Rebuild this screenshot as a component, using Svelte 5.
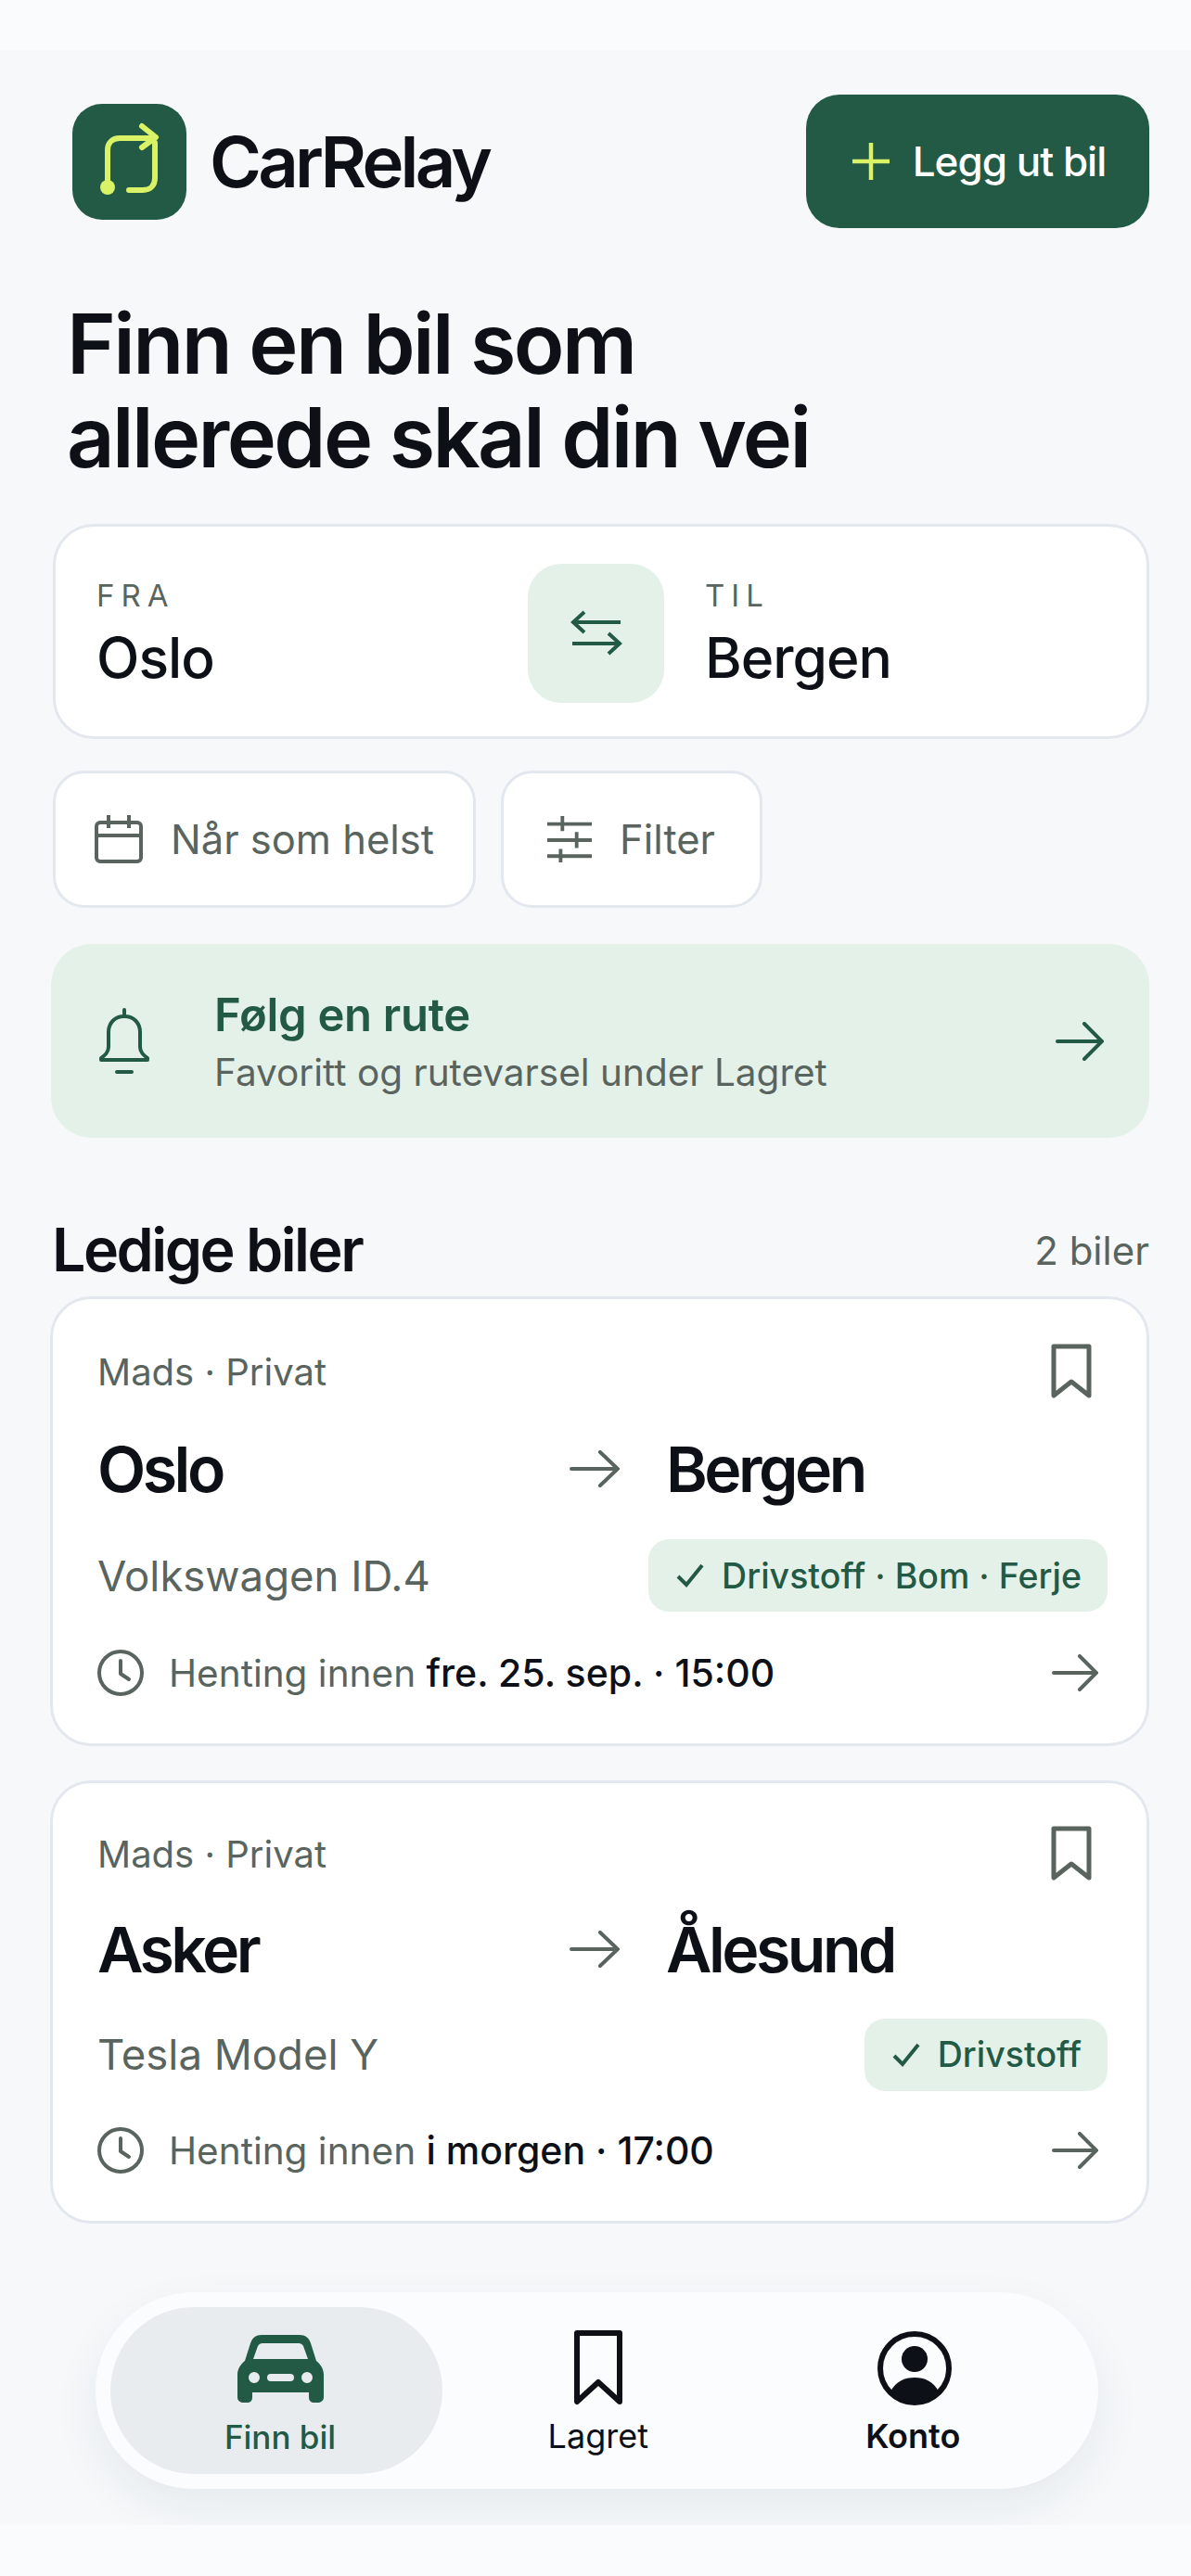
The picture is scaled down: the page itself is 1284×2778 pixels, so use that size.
<script>
	const cars = [
		{
			from: 'Oslo',
			to: 'Bergen',
			model: 'Volkswagen ID.4',
			tag: 'Drivstoff · Bom · Ferje',
			pickup: 'fre. 25. sep. · 15:00'
		},
		{
			from: 'Asker',
			to: 'Ålesund',
			model: 'Tesla Model Y',
			tag: 'Drivstoff',
			pickup: 'i morgen · 17:00'
		}
	];
</script>

<div class="screen">
	<div class="strip"></div>
	<main>
		<header>
			<div class="brand">
				<svg class="logo" viewBox="0 0 123 125">
					<rect width="123" height="125" rx="32" fill="#235a46" />
					<path d="M38 90V50C38 42 43 37 51 37H88M75 24L90 36L75 47M89 42V80C89 88 84 93 76 93H61" fill="none" stroke="#d9f266" stroke-width="6" stroke-linecap="round" stroke-linejoin="round" />
					<circle cx="38" cy="90" r="8" fill="#d9f266" />
				</svg>
				<span class="name">CarRelay</span>
			</div>
			<button class="post">
				<svg width="46" height="46" viewBox="0 0 46 46"><path d="M23 3V43M3 23H43" stroke="#d9f266" stroke-width="4.5" /></svg>
				Legg ut bil
			</button>
		</header>

		<h1>Finn en bil som<br />allerede skal din vei</h1>

		<section class="route">
			<div class="place">
				<span class="label">FRA</span>
				<span class="city">Oslo</span>
			</div>
			<button class="swap" aria-label="Bytt">
				<svg width="56" height="50" viewBox="0 0 56 50" fill="none" stroke="#235a46" stroke-width="4">
					<path d="M2 13H54M15 2L3 13L15 24M2 36H54M41 25L53 36L41 47" />
				</svg>
			</button>
			<div class="place">
				<span class="label">TIL</span>
				<span class="city">Bergen</span>
			</div>
		</section>

		<div class="chips">
			<button class="chip when">
				<svg width="52" height="52" viewBox="0 0 52 52" fill="none" stroke="#5a645f" stroke-width="4">
					<rect x="2" y="8" width="48" height="42" rx="4" />
					<path d="M2 22H50M15 0V14M37 0V14" />
				</svg>
				Når som helst
			</button>
			<button class="chip filter">
				<svg width="48" height="52" viewBox="0 0 50 52" fill="none" stroke="#5a645f" stroke-width="4">
					<path d="M0 9H50M0 27H50M0 45H50M17 0V17M33 18V36M15 37V52" />
				</svg>
				Filter
			</button>
		</div>

		<section class="follow">
			<svg width="56" height="72" viewBox="0 0 56 72" fill="none" stroke="#235a46" stroke-width="4" stroke-linecap="round" stroke-linejoin="round">
				<path d="M28 2V9M11 26C11 16 18 9 28 9S45 16 45 26V42C45 48 49 51 53 54V56H3V54C7 51 11 48 11 42ZM20 69H36" />
			</svg>
			<div class="follow-text">
				<strong>Følg en rute</strong>
				<span>Favoritt og rutevarsel under Lagret</span>
			</div>
			<svg class="arrow" width="52" height="42" viewBox="0 0 52 42" fill="none" stroke="#235a46" stroke-width="4" stroke-linecap="round">
				<path d="M2 21H49M31 2L50 21L31 40" />
			</svg>
		</section>

		<div class="list-head">
			<h2>Ledige biler</h2>
			<span>2 biler</span>
		</div>

		{#each cars as car}
			<article class="car">
				<div class="row top">
					<span class="owner">Mads · Privat</span>
					<svg width="44" height="60" viewBox="0 0 44 60" fill="none" stroke="#5a645f" stroke-width="5" stroke-linejoin="round">
						<path d="M3 3H41V56L22 41L3 56Z" />
					</svg>
				</div>
				<div class="row trip">
					<span class="end">{car.from}</span>
					<svg width="54" height="40" viewBox="0 0 54 40" fill="none" stroke="#5a645f" stroke-width="4" stroke-linecap="round">
						<path d="M2 20H51M33 2L52 20L33 38" />
					</svg>
					<span class="end">{car.to}</span>
				</div>
				<div class="row meta">
					<span class="model">{car.model}</span>
					<span class="tag">
						<svg width="30" height="26" viewBox="0 0 30 26" fill="none" stroke="#235a46" stroke-width="4"><path d="M2 14L11 23L28 2" /></svg>
						{car.tag}
					</span>
				</div>
				<div class="row pick">
					<svg width="50" height="50" viewBox="0 0 50 50" fill="none" stroke="#5a645f" stroke-width="4" stroke-linecap="round" stroke-linejoin="round">
						<circle cx="25" cy="25" r="23" />
						<path d="M25 12V26L34 32" />
					</svg>
					<span class="pickup">Henting innen <b>{car.pickup}</b></span>
					<svg class="go" width="50" height="40" viewBox="0 0 50 40" fill="none" stroke="#5a645f" stroke-width="4" stroke-linecap="round">
						<path d="M2 20H47M30 2L48 20L30 38" />
					</svg>
				</div>
			</article>
		{/each}

		<nav>
			<div class="tab active">
				<svg width="93" height="73" viewBox="0 0 93 73">
					<path fill="#235a46" fill-rule="evenodd" d="M26 0H67C73 0 77 3 79 9L85 28C90 32 93 37 93 43V67C93 71 90 73 86 73H83C79 73 77 71 77 67V62H16V67C16 71 14 73 10 73H7C3 73 0 71 0 67V43C0 37 3 32 8 28L14 9C16 3 20 0 26 0ZM27 9C25 9 23 10 22 12L17 26H76L71 12C70 10 68 9 66 9ZM18 40A6 6 0 1 0 18 52A6 6 0 1 0 18 40ZM75 40A6 6 0 1 0 75 52A6 6 0 1 0 75 40ZM36 42A4 4 0 0 0 36 50H57A4 4 0 0 0 57 42Z" />
				</svg>
				<span>Finn bil</span>
			</div>
			<div class="tab">
				<svg width="52" height="81" viewBox="0 0 52 81" fill="none" stroke="#0d1117" stroke-width="6" stroke-linejoin="round">
					<path d="M3 3H49V77L26 56L3 77Z" />
				</svg>
				<span>Lagret</span>
			</div>
			<div class="tab konto">
				<svg width="80" height="80" viewBox="0 0 80 80">
					<circle cx="40" cy="40" r="37" fill="none" stroke="#0d1117" stroke-width="6" />
					<circle cx="40" cy="30" r="14" fill="#0d1117" />
					<path d="M14 65C20 54 29 50 40 50S60 54 66 65C59 73 50 77 40 77S21 73 14 65Z" fill="#0d1117" />
				</svg>
				<span class="strong">Konto</span>
			</div>
		</nav>
	</main>
	<div class="strip bottom"></div>
</div>

<style>
	:global(body) {
		margin: 0;
		background: #fafbfc;
	}
	.screen {
		width: 1284px;
		height: 2778px;
		display: flex;
		flex-direction: column;
		font-family: Inter, 'Noto Sans', sans-serif;
		color: #0d1117;
		overflow: hidden;
	}
	.strip {
		height: 54px;
		background: #fafbfc;
		flex: none;
	}
	main {
		flex: 1;
		min-height: 0;
		background: #f6f8fa;
		padding: 48px 45px 0 55px;
		box-sizing: border-box;
	}
	header {
		display: flex;
		justify-content: space-between;
		align-items: center;
		padding-left: 23px;
	}
	.brand {
		display: flex;
		align-items: center;
		gap: 25px;
	}
	.logo {
		width: 123px;
		height: 125px;
	}
	.name {
		font-size: 76px;
		font-weight: 600;
		letter-spacing: -3.8px;
	}
	button {
		font-family: inherit;
		border: none;
		cursor: pointer;
	}
	.post {
		width: 370px;
		height: 144px;
		background: #235a46;
		color: #fff;
		border-radius: 36px;
		font-size: 44px;
		font-weight: 500;
		letter-spacing: -1px;
		display: flex;
		align-items: center;
		justify-content: center;
		gap: 22px;
	}
	h1 {
		margin: 74px 0 0 17px;
		font-size: 90px;
		line-height: 101px;
		font-weight: 600;
		letter-spacing: -2.6px;
	}
	.route {
		margin: 43px 0 0 2px;
		height: 232px;
		box-sizing: border-box;
		background: #fff;
		border: 3px solid #e3e7ee;
		border-radius: 44px;
		display: flex;
		align-items: center;
		padding: 0 40px 0 44px;
	}
	.place {
		display: flex;
		flex-direction: column;
		gap: 10px;
		padding-top: 5px;
	}
	.place:first-child {
		width: 465px;
	}
	.label {
		font-size: 33px;
		letter-spacing: 7px;
		color: #5a645f;
	}
	.city {
		font-size: 60.5px;
		font-weight: 500;
		letter-spacing: -1px;
	}
	.swap {
		width: 147px;
		height: 150px;
		margin: 4px 44px 0 0;
		border-radius: 36px;
		background: #e4f1e9;
		display: flex;
		align-items: center;
		justify-content: center;
	}
	.chips {
		display: flex;
		gap: 27px;
		margin: 34px 0 0 2px;
	}
	.chip {
		height: 148px;
		box-sizing: border-box;
		padding: 0 42px;
		background: #fff;
		border: 3px solid #e3e7ee;
		border-radius: 34px;
		font-size: 43.5px;
		color: #5a645f;
		display: flex;
		align-items: center;
		gap: 30px;
	}
	.filter {
		padding: 0 48px 0 47px;
	}
	.follow {
		margin-top: 39px;
		height: 209px;
		padding: 0 49px 0 51px;
		background: #e4f1e9;
		border-radius: 44px;
		display: flex;
		align-items: center;
		gap: 69px;
	}
	.follow-text {
		display: flex;
		flex-direction: column;
		gap: 8px;
	}
	.follow-text strong {
		font-size: 49px;
		font-weight: 600;
		letter-spacing: -0.3px;
		color: #235a46;
	}
	.follow-text span {
		font-size: 40.5px;
		color: #5a645f;
	}
	.arrow {
		margin-left: auto;
	}
	.list-head {
		margin: 82px 0 11px 2px;
		display: flex;
		justify-content: space-between;
		align-items: center;
		height: 78px;
	}
	h2 {
		margin: 0 0 0 -1px;
		font-size: 64.5px;
		font-weight: 600;
		letter-spacing: -2.5px;
	}
	.list-head span {
		font-size: 42px;
		color: #5a645f;
	}
	.car {
		margin: 0 0 37px -1px;
		box-sizing: border-box;
		height: 478px;
		background: #fff;
		border: 3px solid #e3e7ee;
		border-radius: 44px;
		padding: 46px 42px 41px 48px;
		display: flex;
		flex-direction: column;
		justify-content: space-between;
	}
	.car:first-of-type {
		height: 485px;
		padding-top: 48px;
	}
	.row {
		display: flex;
		align-items: center;
	}
	.top {
		height: 60px;
		justify-content: space-between;
		padding-right: 17px;
	}
	.owner {
		font-size: 40px;
		color: #5a645f;
	}
	.trip {
		height: 90px;
	}
	.end {
		font-size: 68px;
		font-weight: 600;
		letter-spacing: -3.5px;
	}
	.trip .end:first-child {
		width: 509px;
	}
	.trip svg {
		margin-right: 50px;
	}
	.meta {
		height: 80px;
		justify-content: space-between;
	}
	.model {
		font-size: 45.5px;
		color: #5a645f;
	}
	.tag {
		height: 78px;
		padding: 0 28px 0 30px;
		border-radius: 22px;
		background: #e4f1e9;
		color: #235a46;
		font-size: 37.5px;
		font-weight: 500;
		display: flex;
		align-items: center;
		gap: 19px;
	}
	.pick {
		height: 70px;
		gap: 27px;
	}
	.pickup {
		font-size: 40.5px;
		color: #5a645f;
	}
	.pickup b {
		font-size: 41px;
		font-weight: 500;
		color: #0d1117;
	}
	.go {
		margin-left: auto;
		margin-right: 10px;
	}
	nav {
		margin: 74px 55px 0 48px;
		height: 212px;
		box-sizing: border-box;
		padding: 16px 32px 16px 16px;
		background: #fbfcfe;
		border-radius: 106px;
		box-shadow: 0 20px 50px rgba(30, 50, 70, 0.07);
		display: flex;
	}
	.tab {
		flex: 1;
		display: flex;
		flex-direction: column;
		align-items: center;
		justify-content: flex-end;
		padding-bottom: 19px;
		gap: 11px;
		font-size: 36px;
	}
	.tab.active {
		flex: none;
		width: 358px;
		box-sizing: border-box;
		padding-left: 8px;
		gap: 16px;
		background: #e9ecef;
		border-radius: 90px;
		color: #235a46;
		font-size: 35px;
		font-weight: 500;
	}
	.konto {
		padding-left: 4px;
	}
	.konto svg {
		margin-left: 4px;
	}
	.strong {
		font-weight: 600;
	}
	.bottom {
		height: 55px;
	}
</style>
